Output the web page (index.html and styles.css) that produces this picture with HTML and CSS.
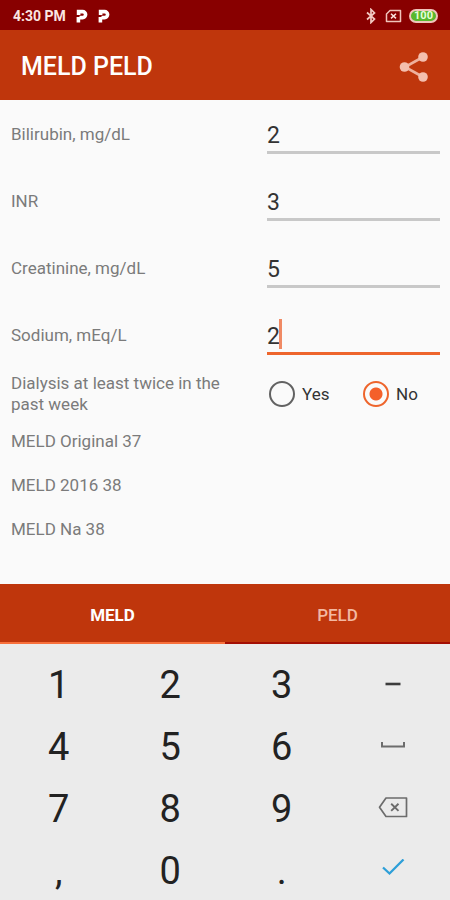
FILE: index.html
```html
<!DOCTYPE html>
<html lang="en">
<head>
<meta charset="utf-8">
<meta name="viewport" content="width=device-width, initial-scale=1">
<title>MELD PELD</title>
<link rel="stylesheet" href="styles.css">
</head>
<body>
<div class="status">
  <span class="time">4:30 PM</span>
  <svg class="app-dot" width="12" height="14" viewBox="0 0 12 14"><path d="M2.4 13.5V8M2.6 6V2.6H6.6A2.8 2.8 0 0 1 6.6 8.6H3.5" /></svg>
  <svg class="app-dot" width="12" height="14" viewBox="0 0 12 14"><path d="M2.4 13.5V8M2.6 6V2.6H6.6A2.8 2.8 0 0 1 6.6 8.6H3.5" /></svg>
  <span class="status-icons">
    <svg width="10" height="16" viewBox="0 0 10 16"><path d="M1 4.5L8.5 11L5 14.5V1.5L8.5 5L1 11.5" fill="none" stroke="#f3c9c2" stroke-width="1.7"/></svg>
    <svg width="17" height="14" viewBox="0 0 17 14"><path d="M5 1.5H15.5V12.5H1.5V5Z" fill="none" stroke="#f0c4bb" stroke-width="1.5" stroke-linejoin="round"/><path d="M6 4.8L11 9.4M11 4.8L6 9.4" stroke="#fbe3de" stroke-width="1.5"/></svg>
    <span class="battery">100</span>
  </span>
</div>
<header class="appbar">
  <h1>MELD PELD</h1>
  <button class="share" type="button" aria-label="Share">
    <svg width="30" height="32" viewBox="0 0 30 32"><path d="M24 6L6 16L24 26" fill="none" stroke="#eeb09c" stroke-width="2.6"/><g fill="#f4bfae"><circle cx="24" cy="6" r="4.8"/><circle cx="5.5" cy="16" r="4.8"/><circle cx="24" cy="26" r="4.8"/></g></svg>
  </button>
</header>
<main>
  <form class="form">
    <div class="row"><label for="bili">Bilirubin, mg/dL</label><div class="field"><input id="bili" type="text" inputmode="decimal" value="2"></div></div>
    <div class="row"><label for="inr">INR</label><div class="field"><input id="inr" type="text" inputmode="decimal" value="3"></div></div>
    <div class="row"><label for="crea">Creatinine, mg/dL</label><div class="field"><input id="crea" type="text" inputmode="decimal" value="5"></div></div>
    <div class="row"><label for="sod">Sodium, mEq/L</label><div class="field active"><input id="sod" type="text" inputmode="decimal" value="2"></div></div>
    <div class="row dialysis" role="radiogroup" aria-labelledby="dial">
      <span id="dial">Dialysis at least twice in the past week</span>
      <div class="options">
        <label><input type="radio" name="dialysis" value="yes">Yes</label>
        <label><input type="radio" name="dialysis" value="no" checked>No</label>
      </div>
    </div>
  </form>
  <div class="results">
    <p>MELD Original 37</p>
    <p>MELD 2016 38</p>
    <p>MELD Na 38</p>
  </div>
</main>
<nav class="tabs">
  <button type="button" class="selected">MELD</button>
  <button type="button">PELD</button>
</nav>
<div class="keypad">
  <button type="button">1</button><button type="button">2</button><button type="button">3</button>
  <button type="button" aria-label="Minus"><svg width="30" height="24" viewBox="0 0 30 24"><path d="M7.5 11H22.5" stroke="#3c3c3c" stroke-width="2.6"/></svg></button>
  <button type="button">4</button><button type="button">5</button><button type="button">6</button>
  <button type="button" aria-label="Space"><svg width="30" height="24" viewBox="0 0 30 24"><path d="M4 7V11.5H26V7" fill="none" stroke="#6c6c6c" stroke-width="2"/></svg></button>
  <button type="button">7</button><button type="button">8</button><button type="button">9</button>
  <button type="button" aria-label="Delete"><svg width="30" height="24" viewBox="0 0 30 24"><path d="M8 1H28.5V19.5H8L1.5 10.3Z" fill="none" stroke="#6c6c6c" stroke-width="1.7" stroke-linejoin="round"/><path d="M13.2 6.7L20.5 13.9M20.5 6.7L13.2 13.9" stroke="#6c6c6c" stroke-width="1.9"/></svg></button>
  <button type="button">,</button><button type="button">0</button><button type="button">.</button>
  <button type="button" aria-label="Done"><svg width="30" height="24" viewBox="0 0 30 24"><path d="M5 8.5L11.5 14.5L25.5 .5" fill="none" stroke="#2d9fd8" stroke-width="2.3"/></svg></button>
</div>
</body>
</html>
```
FILE: styles.css
```css
* {
  box-sizing: border-box;
}

body {
  margin: 0;
  min-height: 100vh;
  display: flex;
  flex-direction: column;
  background: #fafafa;
  color: #7b7b7b;
  font-family: Roboto, "Liberation Sans", sans-serif;
  font-size: 17px;
  line-height: 21px;
}

button {
  border: 0;
  padding: 0;
  background: none;
  color: inherit;
  font: inherit;
}

.status {
  display: flex;
  align-items: center;
  gap: 10px;
  height: 30px;
  padding: 2px 12px 0 13px;
  background: #880000;
  color: #fbe6e2;
  font-size: 14px;
  font-weight: 700;
}

.app-dot {
  fill: none;
  stroke: #fff;
  stroke-width: 3.6;
}

.status-icons {
  display: flex;
  align-items: center;
  gap: 6px;
  margin-left: auto;
}

.battery {
  width: 29px;
  height: 14px;
  margin-left: 1px;
  border: 2px solid #f0c4bb;
  border-radius: 7px;
  background: #58b82e;
  color: #e6ffd8;
  font-size: 11px;
  line-height: 10px;
  text-align: center;
}

.status-icons svg:first-child {
  margin-right: 3px;
}

.appbar {
  display: flex;
  align-items: center;
  justify-content: space-between;
  height: 70px;
  padding: 4px 21px 0;
  background: #bf360c;
  color: #fff;
}

h1 {
  margin: 0;
  font-size: 25px;
  font-weight: 500;
  line-height: 32px;
}

.share,
.share svg {
  display: block;
}

main {
  flex: 1;
  padding: 1px 10px 0 11px;
}

.row {
  display: grid;
  grid-template-columns: 37fr 25fr;
  align-items: center;
  height: 67px;
}

.row > :first-child {
  padding-right: 24px;
}

.field {
  position: relative;
}

.field input {
  display: block;
  width: 100%;
  height: 38px;
  padding: 4px 0 0;
  border: 0;
  border-bottom: 3px solid #c8c8c8;
  border-radius: 0;
  outline: 0;
  background: none;
  color: #333;
  font: inherit;
  font-size: 23px;
}

.active input {
  border-color: #ee652c;
}

.active::after {
  content: "";
  position: absolute;
  left: 12px;
  top: 2px;
  width: 3px;
  height: 30px;
  background: #f08a64;
}

.dialysis {
  height: 50px;
}

.options {
  display: grid;
  grid-template-columns: 94px 1fr;
  padding-left: 2px;
  color: #333;
}

.options label {
  display: flex;
  align-items: center;
  gap: 7px;
}

.options input {
  appearance: none;
  width: 26px;
  height: 26px;
  margin: 0;
  border: 2px solid #626262;
  border-radius: 50%;
}

.options input:checked {
  border-color: #ee652c;
  background: radial-gradient(circle, #f4602a 6px, transparent 7px);
}

.results p {
  margin: 0;
  line-height: 44px;
}

.tabs {
  display: grid;
  grid-template-columns: 1fr 1fr;
  height: 60px;
  background: #bf360c;
  color: #f3b8a2;
  font-weight: 500;
}

.tabs button {
  padding-top: 4px;
  border-bottom: 2px solid #a30e04;
}

.tabs .selected {
  border-color: #f8703c;
  color: #fff;
  font-weight: 700;
}

.keypad {
  display: grid;
  grid-template-columns: repeat(4, 1fr);
  grid-auto-rows: 62px;
  padding: 8px 1px 0 3px;
  background: #ebebeb;
  color: #222;
  font-size: 38px;
  line-height: 58px;
}

.keypad button {
  display: flex;
  align-items: center;
  justify-content: center;
  padding-top: 3px;
}
```
